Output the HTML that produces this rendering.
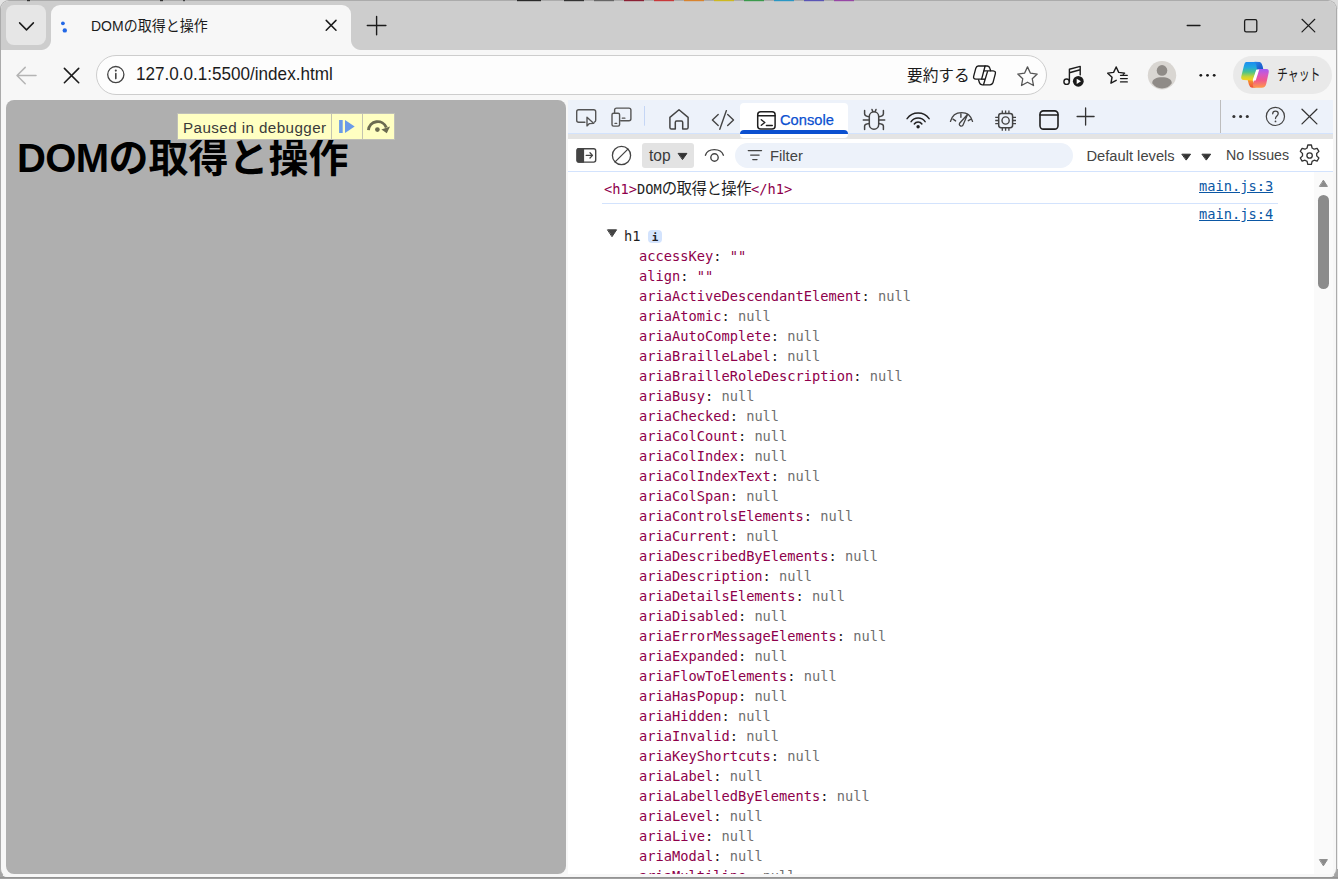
<!DOCTYPE html>
<html lang="ja"><head><meta charset="utf-8"><title>DOMの取得と操作</title>
<style>
*{box-sizing:border-box;margin:0;padding:0}
html,body{width:1338px;height:879px;overflow:hidden;background:#a4a4a4}
body{font-family:"Liberation Sans","Noto Sans CJK JP",sans-serif;color:#1b1b1b;position:relative}
div,span.a{position:absolute}
svg{position:absolute;left:0;top:0;overflow:visible;fill:none;stroke-linecap:round;stroke-linejoin:round}
.t{white-space:nowrap;transform-origin:0 0}
#corner1{left:0;top:0;width:12px;height:12px;background:#e4e4e4}
#corner2{left:1326px;top:0;width:12px;height:12px;background:#dcdcdc}
#win{left:0;top:0;width:1337px;height:878px;background:#f7f7f7;border-radius:9px;border:1px solid #ababab;border-bottom-color:#f7f7f7;overflow:hidden}
#titlebar{left:0;top:0;width:1338px;height:49px;background:#cdcdcd}
#tabdrop{left:6px;top:5px;width:40px;height:40px;border-radius:8px;background:#e6e6e6}
#tab{left:51px;top:5px;width:300px;height:45px;background:#f7f7f7;border-radius:9px 9px 0 0}
#tab:before,#tab:after{content:"";position:absolute;bottom:0;width:10px;height:10px}
#tab:before{left:-10px;background:radial-gradient(circle at 0 0,transparent 9.5px,#f7f7f7 10.5px)}
#tab:after{right:-10px;background:radial-gradient(circle at 100% 0,transparent 9.5px,#f7f7f7 10.5px)}
#tabtitle{left:91px;top:14.700px;font-size:14px;transform:scaleY(1.06);transform-origin:0 50%;line-height:22px;color:#1b1b1b}
#addr{left:96px;top:55px;width:951px;height:40px;border-radius:20px;background:#fdfdfd;border:1px solid #cdcdcd}
#url{left:136px;top:64px;font-size:17.1px;transform:scaleY(1.1);transform-origin:0 50%;line-height:20px;color:#1b1b1b}
#sumtxt{left:907px;top:64.500px;font-size:15.7px;line-height:22px;color:#1b1b1b}
#chat{left:1233px;top:56px;width:99px;height:38px;border-radius:19px;background:#e9e9e9}
#chattxt{left:1277px;top:63.500px;font-size:16px;transform:scaleX(.68);line-height:22px;color:#1b1b1b}
#page{left:6px;top:100px;width:560px;height:774px;border-radius:8px;background:#afafaf}
#h1{left:17px;top:128.400px;font-size:40px;font-weight:bold;line-height:60px;color:#000}
#paused{left:177px;top:113px;height:27px;width:218px;background:#ffffc2;border:1px solid #bfbfb8}
#pausedtxt{left:183px;top:117.500px;font-size:15.2px;letter-spacing:.42px;line-height:20px;color:#3a3a3a}
#dt{left:568px;top:100px;width:765px;height:774px;background:#fff}
#dttabs{left:568px;top:100px;width:765px;height:33px;background:#edf2fa}
#dtstrip{left:568px;top:133px;width:765px;height:6px;background:#e4e4e4;border-top:1px solid #d3e3fd}
#ctab{left:740px;top:103px;width:108px;height:35px;background:#fff;border-radius:4px}
#ctabline{left:740px;top:130px;width:108px;height:4px;background:#0b50d0;border-radius:4px 4px 0 0}
#ctabtxt{left:780px;top:110px;-webkit-text-stroke:.25px #0b50d0;font-size:14.7px;line-height:20px;color:#0b50d0}
#ctb{left:568px;top:139px;width:765px;height:33px;background:#fff;border-bottom:1px solid #d3e3fd}
#topbtn{left:642px;top:143px;width:52px;height:25px;background:#e3e3e3;border-radius:3px}
#toptxt{left:649px;top:146px;font-size:15.600px;line-height:20px;color:#3a3a3a}
#filter{left:735px;top:143px;width:338px;height:25px;background:#edf2fa;border-radius:13px}
#filtertxt{left:770px;top:146px;font-size:14.8px;line-height:20px;color:#444}
#levels{left:1086.500px;top:146px;font-size:14.7px;line-height:20px;color:#444}
#issues{left:1226px;top:145px;font-size:14.2px;line-height:20px;color:#444}
#console{left:568px;top:172px;width:765px;height:702px;overflow:hidden;font-family:"DejaVu Sans Mono","Liberation Mono","Noto Sans CJK JP",monospace;font-size:13.7px;line-height:20px;white-space:nowrap;color:#1f1f1f}
#rows{left:71px;top:74px}
.r{position:relative;height:20px;white-space:pre}
.k{color:#8e004b}.s{color:#8e004b}.n{color:#6f6f6f}
.cj{font-size:15.4px;letter-spacing:-.5px;position:relative;top:0px}
.lnk{color:#0b57a4;text-decoration:underline;left:631px}
#sbtrack{left:1314px;top:172px;width:19px;height:702px;background:#fafafa}
#sbthumb{left:1318px;top:195px;width:11px;height:94px;border-radius:6px;background:#8b8b8b}
</style></head><body>
<div id="corner1"></div><div id="corner2"></div>
<div id="win">
<div id="titlebar"></div>
</div>
<svg width="1338" height="2" viewBox="0 0 1338 2" stroke="none">
<rect x="27" y="0" width="3" height="1.2" fill="#333"/><rect x="160" y="0" width="3" height="1.2" fill="#333"/><rect x="183" y="0" width="2" height="1.2" fill="#444"/>
<rect x="517" y="0" width="24" height="1.2" fill="#2a2a2a"/><rect x="564" y="0" width="20" height="1.2" fill="#333"/><rect x="594" y="0" width="20" height="1.2" fill="#666"/><rect x="624" y="0" width="20" height="1.2" fill="#8a2034"/><rect x="654" y="0" width="20" height="1.2" fill="#c8383a"/><rect x="684" y="0" width="20" height="1.2" fill="#d8832e"/><rect x="714" y="0" width="20" height="1.2" fill="#cdb820"/><rect x="744" y="0" width="20" height="1.2" fill="#3b9a4c"/><rect x="774" y="0" width="20" height="1.2" fill="#2a97c4"/><rect x="804" y="0" width="20" height="1.2" fill="#5a55b5"/><rect x="834" y="0" width="20" height="1.2" fill="#9747a5"/>
</svg>
<div id="tabdrop"></div>
<div id="tab"></div>
<div id="tabtitle" class="t">DOMの取得と操作</div>
<div id="addr"></div>
<div id="url" class="t">127.0.0.1:5500/index.html</div>
<div id="sumtxt" class="t">要約する</div>
<div id="chat"></div>
<div id="chattxt" class="t">チャット</div>
<svg width="1338" height="100" viewBox="0 0 1338 100">
<defs>
<linearGradient id="cg1" x1="0" y1="0" x2="0" y2="1"><stop offset="0" stop-color="#1c8cf2"/><stop offset=".3" stop-color="#22a9dc"/><stop offset=".55" stop-color="#4cc38c"/><stop offset=".8" stop-color="#c8d435"/><stop offset="1" stop-color="#fbd31a"/></linearGradient>
<linearGradient id="cg2" x1="0" y1="0" x2="0" y2="1"><stop offset="0" stop-color="#a55cf4"/><stop offset=".3" stop-color="#d658c4"/><stop offset=".6" stop-color="#f0598c"/><stop offset="1" stop-color="#ff9c48"/></linearGradient>
<linearGradient id="cg3" x1="0" y1="0" x2="1" y2="1"><stop offset="0" stop-color="#2a8ae8"/><stop offset="1" stop-color="#1a4fc4"/></linearGradient>
<linearGradient id="cg4" x1="0" y1="0" x2="0" y2="1"><stop offset="0" stop-color="#f59a30"/><stop offset="1" stop-color="#ee4d3a"/></linearGradient>
</defs>
<!-- tab dropdown chevron -->
<polyline points="19.6,22.9 26.5,29.9 33.4,22.9" stroke="#1b1b1b" stroke-width="1.5"/>
<!-- favicon dots -->
<circle cx="62.9" cy="23.3" r="1.9" fill="#2368e6" stroke="none"/><circle cx="64.8" cy="30.4" r="2.2" fill="#2368e6" stroke="none"/>
<!-- tab close -->
<path d="M326.2 20.4l9.8 9.8M336 20.4l-9.8 9.8" stroke="#1b1b1b" stroke-width="1.5"/>
<!-- new tab -->
<path d="M367.3 25.5h18.6M376.6 16.4v18.4" stroke="#1b1b1b" stroke-width="1.4"/>
<!-- window controls -->
<path d="M1187.2 25.5h12.8" stroke="#1b1b1b" stroke-width="1.3"/>
<rect x="1244.6" y="19.6" width="12.2" height="12.2" rx="1.6" stroke="#1b1b1b" stroke-width="1.3"/>
<path d="M1302 19.3l12.8 12.6M1314.8 19.3l-12.8 12.6" stroke="#1b1b1b" stroke-width="1.2"/>
<!-- back -->
<path d="M36 75.5H17.2M25.2 67.4l-8.2 8.1 8.2 8.2" stroke="#b4b4b4" stroke-width="1.5"/>
<!-- stop -->
<path d="M64.4 68.4l14.3 14.3M78.7 68.4l-14.3 14.3" stroke="#1b1b1b" stroke-width="1.6"/>
<!-- info -->
<circle cx="115.8" cy="74.6" r="8.1" stroke="#444" stroke-width="1.3"/>
<path d="M115.8 73.6v5" stroke="#444" stroke-width="1.6"/><circle cx="115.8" cy="70.6" r="1.05" fill="#444" stroke="none"/>
<!-- summarize copilot outline -->
<g transform="translate(968 60) scale(.0364)" stroke="#1b1b1b" stroke-width="37">
<path d="M280 165L470 165L375 525L215 525Q140 520 155 450L215 225Q235 165 280 165Z"/>
<path d="M470 165L530 165Q585 170 600 225L622 297"/>
<path d="M440 297L690 297Q770 305 750 380L690 610Q665 680 600 682L390 682Q330 675 315 625L290 545"/>
<path d="M375 525L462 528M535 318L428 672"/>
</g>
<!-- star -->
<path d="M1027.500 66.900l2.950 6.300 6.750.85-4.950 4.700 1.250 6.800-6-3.300-6 3.300 1.250-6.800-4.950-4.700 6.750-.85z" stroke="#555" stroke-width="1.3"/>
<!-- music -->
<path d="M1069.400 81.400V69.300l10.800-2.900v9.200M1069.400 72.700l10.800-2.900" stroke="#1b1b1b" stroke-width="1.4"/>
<circle cx="1066.600" cy="81.700" r="2.700" stroke="#1b1b1b" stroke-width="1.4"/>
<circle cx="1078.300" cy="81.300" r="6.400" fill="#f7f7f7" stroke="none"/><circle cx="1078.300" cy="81.300" r="5.400" fill="#1b1b1b" stroke="none"/>
<path d="M1076.700 78.700l4.300 2.600-4.300 2.600z" fill="#fff" stroke="none"/>
<!-- favorites -->
<path d="M1116.200 67l2.500 5.400 5.900.7-1.300 1.200M1116.200 67l-2.600 5.400-5.900.75 4.350 4.100-1.100 5.950 5.250-2.900" stroke="#1b1b1b" stroke-width="1.4"/>
<path d="M1120.500 75.300h6.800M1120.500 78.600h6.800M1120.500 81.900h6.800" stroke="#1b1b1b" stroke-width="1.3"/>
<!-- avatar -->
<circle cx="1162" cy="75.200" r="14.200" fill="#d9d6d2" stroke="none"/>
<circle cx="1162" cy="70.400" r="5.300" fill="#8f8b87" stroke="none"/>
<path d="M1152.200 83.300c0-4.200 4.200-6 9.800-6s9.800 1.800 9.800 6c-2.400 3.400-5.800 5.200-9.800 5.200s-7.400-1.800-9.800-5.200z" fill="#8f8b87" stroke="none"/>
<!-- dots -->
<circle cx="1200.800" cy="75.300" r="1.400" fill="#1b1b1b" stroke="none"/><circle cx="1207.500" cy="75.300" r="1.400" fill="#1b1b1b" stroke="none"/><circle cx="1214.200" cy="75.300" r="1.400" fill="#1b1b1b" stroke="none"/>
<!-- copilot logo -->
<g transform="translate(1228 52) scale(.08224)" stroke="none">
<path d="M240 340L300 340L335 432L292 434Q262 428 254 396Z" fill="url(#cg4)"/>
<path d="M222 121L345 121L412 150L428 208L352 212L300 346L190 341Q153 336 162 294L195 160Q203 121 222 121Z" fill="url(#cg1)"/>
<path d="M322 120L385 121Q405 124 412 150L428 208L352 212Q350 150 322 120Z" fill="url(#cg3)"/>
<path d="M372 207L470 207Q502 210 495 250L465 386Q455 433 410 436L312 436L300 400Z" fill="url(#cg2)"/>
<path d="M343 216L380 214L337 346L300 346Z" fill="#fff"/>
</g>
</svg>
<div id="page"></div>
<div id="h1" class="t"><span style="letter-spacing:-.6px;position:relative;top:-.4px">DOM</span>の取得と操作</div>
<div id="paused"></div>
<div id="pausedtxt" class="t">Paused in debugger</div>
<div id="dt"></div>
<div id="dttabs"></div>
<div id="dtstrip"></div>
<div id="ctab"></div>
<div id="ctabline"></div>
<div id="ctabtxt" class="t">Console</div>
<div id="ctb"></div>
<div id="topbtn"></div>
<div id="toptxt" class="t">top</div>
<div id="filter"></div>
<div id="filtertxt" class="t">Filter</div>
<div id="levels" class="t">Default levels</div>
<div id="issues" class="t">No Issues</div>
<svg width="1338" height="180" viewBox="0 0 1338 180">
<!-- paused overlay icons -->
<path d="M331.500 114v25M362.500 114v25" stroke="#c4c4b0" stroke-width="1" stroke-linecap="butt"/>
<rect x="339.100" y="120" width="3.600" height="13" fill="#6a9be8" stroke="none"/>
<path d="M345 120l9.700 6.500-9.700 6.500z" fill="#6a9be8" stroke="none"/>
<path d="M368.500 130.200a9.200 9.200 0 0 1 17.800-2.600" stroke="#6b6b50" stroke-width="2.900" stroke-linecap="butt"/>
<path d="M381.400 129.500l8.600-2.900-3.200 6.600z" fill="#6b6b50" stroke="none"/>
<circle cx="377.400" cy="129.600" r="2.350" fill="#6b6b50" stroke="none"/>
<!-- inspect -->
<path d="M584.900 122.300h-6.200c-1.100 0-2-.9-2-2v-8.500c0-1.100.9-2 2-2h15c1.100 0 2 .9 2 2v8.500c0 .9-.5 1.600-1.300 1.900" stroke="#555" stroke-width="1.400"/>
<path d="M587 117.300v8.600l2.400-2.300 4.400-.2z" stroke="#555" stroke-width="1.400"/>
<!-- device -->
<path d="M614.600 112.600v-2.500c0-1.100.9-2 2-2h12.300c1.100 0 2 .9 2 2v8.700c0 1.100-.9 2-2 2h-8.200" stroke="#555" stroke-width="1.400"/>
<rect x="612" y="113.300" width="7.600" height="12.800" rx="1.500" stroke="#555" stroke-width="1.400"/>
<path d="M622.300 118.200h2.600M615 123.400h1.700" stroke="#555" stroke-width="1.300"/>
<path d="M644.500 106v19.700" stroke="#c5d6f5" stroke-width="1" stroke-linecap="butt"/>
<!-- home -->
<path d="M669.900 117.400l9.100-7.700 9.100 7.700v10c0 1-.7 1.700-1.700 1.700h-3.700v-6.700c0-.8-.5-1.300-1.300-1.300h-4.800c-.8 0-1.300.5-1.300 1.300v6.700h-3.700c-1 0-1.700-.7-1.700-1.700z" stroke="#444" stroke-width="1.500"/>
<!-- code -->
<path d="M718.200 114.600l-5.800 5.500 5.800 5.500M727.700 114.600l5.800 5.500-5.800 5.500M726.400 110.600l-6.600 18.700" stroke="#444" stroke-width="1.400"/>
<!-- console icon -->
<rect x="757.700" y="111.800" width="17.400" height="17.300" rx="3" stroke="#1f1f1f" stroke-width="1.500"/>
<path d="M757.700 115.700h17.400M761.300 119.800l3.500 2.700-3.500 2.700M766.400 125.500h5.900" stroke="#1f1f1f" stroke-width="1.400"/>
<!-- bug -->
<rect x="869.300" y="111.800" width="9.400" height="17.400" rx="4.700" stroke="#444" stroke-width="1.500"/>
<path d="M872 109.400l.9 2.400M876 109.400l-.9 2.400M863.300 119.900h6M878.700 119.900h6M864.600 110.600v3.200c0 1.800 2.200 2.700 4.700 2.900M883.400 110.600v3.200c0 1.800-2.200 2.700-4.700 2.900M864.600 129.500v-3.400c0-1.800 2.200-2.500 4.700-2.700M883.400 129.500v-3.400c0-1.800-2.200-2.500-4.700-2.700" stroke="#444" stroke-width="1.500"/>
<!-- wifi -->
<path d="M907.100 118.600A13.600 13.600 0 0 1 929.100 118.600M911.100 121.600A8.600 8.600 0 0 1 925.100 121.600M914.300 124A4.600 4.600 0 0 1 921.900 124" stroke="#222" stroke-width="1.500"/>
<circle cx="918.100" cy="126.700" r="1.700" fill="#222" stroke="none"/>
<!-- perf -->
<path d="M950.500 121.400c1.400-5.400 5.600-8.800 11-8.800s9.600 3.400 11 8.800M953 119.200l2.600 1.700M960.900 113.800v3.400M971 119.200l-2.700 1.500" stroke="#444" stroke-width="1.400"/>
<path d="M967.700 114.300l-4.700 10.600c-.5 1.100-1.600 1.500-2.600 1-1-.5-1.400-1.600-.8-2.600z" stroke="#444" stroke-width="1.300"/>
<!-- cpu -->
<rect x="998.700" y="113.600" width="13.900" height="14.100" rx="2.400" stroke="#444" stroke-width="1.500"/>
<circle cx="1005.600" cy="120.500" r="3.600" stroke="#444" stroke-width="1.400"/>
<path d="M1002.300 110.600v3M1005.600 110.600v3M1008.900 110.600v3M1002.300 127.800v3M1005.600 127.800v3M1008.900 127.800v3M995.200 117.300h3.400M995.200 120.500h3.400M995.200 123.700h3.400M1012.600 117.300h3.400M1012.600 120.500h3.400M1012.600 123.700h3.400" stroke="#444" stroke-width="1.300" stroke-linecap="butt"/>
<!-- app -->
<rect x="1040" y="110.900" width="18" height="18.200" rx="3.400" stroke="#1f1f1f" stroke-width="1.600"/>
<path d="M1040 114.900h18" stroke="#1f1f1f" stroke-width="1.500"/>
<!-- plus -->
<path d="M1077.100 116.500h17M1085.600 108v17" stroke="#333" stroke-width="1.300"/>
<path d="M1220.500 100v33" stroke="#bdbdbd" stroke-width="1" stroke-linecap="butt"/>
<circle cx="1233.900" cy="116.500" r="1.55" fill="#333" stroke="none"/><circle cx="1240.600" cy="116.500" r="1.55" fill="#333" stroke="none"/><circle cx="1247.300" cy="116.500" r="1.55" fill="#333" stroke="none"/>
<!-- help -->
<circle cx="1275.400" cy="116.400" r="9.100" stroke="#444" stroke-width="1.200"/>
<path d="M1272.700 113.800c0-1.700 1.200-2.700 2.800-2.700s2.700 1 2.700 2.500c0 2.300-2.700 2.500-2.700 5" stroke="#444" stroke-width="1.300"/><circle cx="1275.500" cy="121.400" r=".9" fill="#444" stroke="none"/>
<!-- dt close -->
<path d="M1302 109.300l14.900 14.600M1316.900 109.300l-14.900 14.600" stroke="#333" stroke-width="1.300"/>
<!-- sidebar -->
<rect x="577.100" y="148.700" width="18.600" height="13.400" rx="2" stroke="#444" stroke-width="1.400"/>
<path d="M577.100 150.200c0-.8.700-1.500 1.500-1.500h4.800v13.400h-4.800c-.8 0-1.500-.7-1.500-1.500z" fill="#444" stroke="#444" stroke-width="1.400"/>
<path d="M586.200 155.400h6.200M590 152.800l2.500 2.600-2.500 2.600" stroke="#444" stroke-width="1.300"/>
<!-- clear -->
<circle cx="621.500" cy="155.500" r="9.100" stroke="#444" stroke-width="1.300"/>
<path d="M615.100 161.900l12.800-12.800" stroke="#444" stroke-width="1.300"/>
<path d="M678.500 153.400h8.400l-4.200 5.900z" fill="#333" stroke="#333" stroke-width="1"/>
<!-- eye -->
<path d="M705.400 155.200c2.400-7.400 15.400-7.400 18 0" stroke="#444" stroke-width="1.400"/>
<circle cx="714.500" cy="157.500" r="3.700" stroke="#444" stroke-width="1.400"/>
<!-- filter icon -->
<path d="M748.300 150.600h13.200M750.700 155.100h8.400M752.800 159.600h4.200" stroke="#444" stroke-width="1.400"/>
<path d="M1182.200 154.200h8.400l-4.200 5.600z" fill="#333" stroke="#333" stroke-width="1"/>
<path d="M1202.300 154.200h8.400l-4.200 5.600z" fill="#333" stroke="#333" stroke-width="1"/>
<!-- gear -->
<g transform="translate(1309.600 155.500)" stroke="#333" stroke-width="1.300">
<path d="M-1.800 -10.500h3.600l.7 3 2.100 1.200 2.900 -.9 1.800 3.100 -2.200 2.100v2.400l2.200 2.100 -1.800 3.100 -2.900 -.9 -2.100 1.200 -.7 3h-3.600l-.7 -3 -2.100 -1.200 -2.900 .9 -1.800 -3.100 2.200 -2.100v-2.400l-2.200 -2.100 1.800 -3.100 2.900 .9 2.100 -1.200z"/>
<circle cx="0" cy="0" r="2.700"/>
</g>
</svg>
<div id="console">
<div style="left:36px;top:7px"><span class="k">&lt;h1&gt;</span>DOM<span class="cj">の取得と操作</span><span class="k">&lt;/h1&gt;</span></div>
<div class="lnk" style="top:4px">main.js:3</div>
<div style="left:34px;top:31px;width:676px;height:1px;background:#d3e3fd"></div>
<div class="lnk" style="top:32px">main.js:4</div>
<div style="left:56px;top:54px">h1</div>
<div style="left:80px;top:58px;width:14px;height:13px;border-radius:4px;background:#d3e3fd"></div>
<div style="left:80px;top:57.500px;width:14px;text-align:center;font-size:11px;line-height:16px;font-weight:bold;color:#1f1f1f">i</div>
<div id="rows">
<div class="r"><span class="k">accessKey</span>: <span class="s">&quot;&quot;</span></div>
<div class="r"><span class="k">align</span>: <span class="s">&quot;&quot;</span></div>
<div class="r"><span class="k">ariaActiveDescendantElement</span>: <span class="n">null</span></div>
<div class="r"><span class="k">ariaAtomic</span>: <span class="n">null</span></div>
<div class="r"><span class="k">ariaAutoComplete</span>: <span class="n">null</span></div>
<div class="r"><span class="k">ariaBrailleLabel</span>: <span class="n">null</span></div>
<div class="r"><span class="k">ariaBrailleRoleDescription</span>: <span class="n">null</span></div>
<div class="r"><span class="k">ariaBusy</span>: <span class="n">null</span></div>
<div class="r"><span class="k">ariaChecked</span>: <span class="n">null</span></div>
<div class="r"><span class="k">ariaColCount</span>: <span class="n">null</span></div>
<div class="r"><span class="k">ariaColIndex</span>: <span class="n">null</span></div>
<div class="r"><span class="k">ariaColIndexText</span>: <span class="n">null</span></div>
<div class="r"><span class="k">ariaColSpan</span>: <span class="n">null</span></div>
<div class="r"><span class="k">ariaControlsElements</span>: <span class="n">null</span></div>
<div class="r"><span class="k">ariaCurrent</span>: <span class="n">null</span></div>
<div class="r"><span class="k">ariaDescribedByElements</span>: <span class="n">null</span></div>
<div class="r"><span class="k">ariaDescription</span>: <span class="n">null</span></div>
<div class="r"><span class="k">ariaDetailsElements</span>: <span class="n">null</span></div>
<div class="r"><span class="k">ariaDisabled</span>: <span class="n">null</span></div>
<div class="r"><span class="k">ariaErrorMessageElements</span>: <span class="n">null</span></div>
<div class="r"><span class="k">ariaExpanded</span>: <span class="n">null</span></div>
<div class="r"><span class="k">ariaFlowToElements</span>: <span class="n">null</span></div>
<div class="r"><span class="k">ariaHasPopup</span>: <span class="n">null</span></div>
<div class="r"><span class="k">ariaHidden</span>: <span class="n">null</span></div>
<div class="r"><span class="k">ariaInvalid</span>: <span class="n">null</span></div>
<div class="r"><span class="k">ariaKeyShortcuts</span>: <span class="n">null</span></div>
<div class="r"><span class="k">ariaLabel</span>: <span class="n">null</span></div>
<div class="r"><span class="k">ariaLabelledByElements</span>: <span class="n">null</span></div>
<div class="r"><span class="k">ariaLevel</span>: <span class="n">null</span></div>
<div class="r"><span class="k">ariaLive</span>: <span class="n">null</span></div>
<div class="r"><span class="k">ariaModal</span>: <span class="n">null</span></div>
<div class="r"><span class="k">ariaMultiline</span>: <span class="n">null</span></div></div>
</div>
<div id="sbtrack"></div>
<div id="sbthumb"></div>
<svg width="1338" height="879" viewBox="0 0 1338 879" stroke="none">
<path d="M607.800 229.800h8.800l-4.400 6.600z" fill="#444" stroke="#444" stroke-width="1"/>
<path d="M1319.800 186.400h7.600l-3.800-5.900z" fill="#8b8b8b" stroke="#8b8b8b" stroke-width="1"/>
<path d="M1319.800 859.600h7.600l-3.800 5.900z" fill="#8b8b8b" stroke="#8b8b8b" stroke-width="1"/>
</svg>
<div style="left:1337px;top:9px;width:1px;height:860px;background:#ececec"></div>
<div style="left:0;top:877px;width:1338px;height:2px;background:linear-gradient(#8c8c8c,#a8a8a8)"></div>
</body></html>
